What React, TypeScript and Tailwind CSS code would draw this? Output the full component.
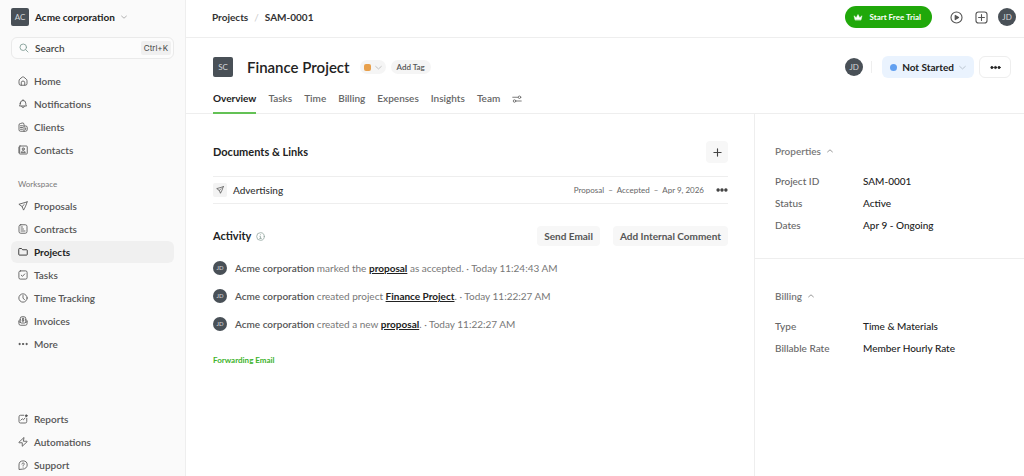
import type { ReactNode } from "react";
import { clsx } from "clsx";

function Icon({ children, className }: { children: ReactNode; className?: string }) {
    return <svg viewBox="0 0 20 20" fill="none" stroke="currentColor" strokeWidth="1.7" strokeLinecap="round" strokeLinejoin="round" aria-hidden="true" className={clsx("shrink-0", className ?? "size-[10px]")}>
        {children}
    </svg>
}

const icons = {
    home: <><path d="M2 9.5C2 8 2.6 7 3.8 6L8 2.5c1.3-1 2.7-1 4 0L16.2 6C17.4 7 18 8 18 9.5V15a3.5 3.5 0 0 1-3.5 3.5h-9A3.5 3.5 0 0 1 2 15z" /><path d="M6.5 18v-4.5a3.5 3.5 0 0 1 7 0V18" /></>,
    bell: <><path d="M4.500 8.500a5.500 5.500 0 0 1 11 0c0 3 .6 4 1.700 5.500H2.800c1.100-1.500 1.700-2.500 1.700-5.500z" /><path d="M7.500 14.500c0 4 5 4 5 0M10 1.500V3" /></>,
    clients: <><path d="M12 18.500V5a3 3 0 0 0-3.500-3L5 3A3 3 0 0 0 2 6v9.500a3 3 0 0 0 3 3h10a3.500 3.500 0 0 0 3.500-3.500v-4A3 3 0 0 0 15.500 8H12" /><path d="M5 7.500h4M5 11h4M5 14.500h4M15.300 12v3" /></>,
    contacts: <><rect x="2.500" y="2" width="16" height="16" rx="1.500" /><circle cx="10.500" cy="8" r="2.200" /><path d="M6.500 14.500c.5-4 7.500-4 8 0zM1 6h3M1 10h3M1 14h3" /></>,
    send: <><path d="M18.200 1.800 1.800 6.500l6.500 4.600 2.800 7.100c3-5 5.400-10.400 7.100-16.400z" /><path d="m8.300 11.100 4.200-4.200" /></>,
    contract: <><rect x="2" y="1.500" width="16" height="17" rx="3.500" /><path d="M6 6h3M6 10h5M6 14h8" /></>,
    folder: <path d="M1.500 4.200c0-.7.500-1.200 1.200-1.200H7l2.300 2.500h8c.7 0 1.200.5 1.200 1.200V15c0 .7-.5 1.200-1.200 1.200H2.700c-.7 0-1.200-.5-1.200-1.200z" />,
    tasks: <><rect x="1.800" y="1.800" width="16.400" height="16.400" rx="3" /><path d="m6.500 10.300 2.500 2.400 4.500-4.900" /></>,
    clock: <><circle cx="10" cy="10" r="8.300" /><path d="M10 5v5.500l3 2.500" /></>,
    invoice: <><path d="M4.500 7C2.500 8 1.800 8.500 1.800 10.500V15A3.500 3.500 0 0 0 5.300 18.500h9.400a3.500 3.500 0 0 0 3.500-3.500v-4.500c0-2-.7-2.500-2.700-3.500" /><path d="M4.500 11V5a3.500 3.500 0 0 1 3.500-3.500h4A3.500 3.500 0 0 1 15.500 5v6M2 11.500l5 2.500h6l5-2.500M11.800 5.500c-3-1.500-4.500.9-2 1.700 3.200.8 2 3.800-1.600 2.500M10 4.200V11" /></>,
    reports: <><path d="M11.500 2.500H5A3 3 0 0 0 2 5.500V15a3 3 0 0 0 3 3h9.500a3 3 0 0 0 3-3V8.500" /><path d="m5.500 12.500 3-3 2.500 2 3-3.500" /><circle cx="16.500" cy="3.500" r="1.800" fill="currentColor" /></>,
    bolt: <path d="M11.500 1.500 1.800 10.500c-.4.500-.1 1 .5 1H8.500v7l9.700-9c.4-.5.100-1-.5-1h-6.200z" />,
    support: <><path d="M2 18.200V10a8.200 8.200 0 1 1 8.200 8.200z" /><path d="M7.800 8c.2-3 5-2.800 4.700.1-.2 1.500-2.300 1.600-2.300 3.400M10.200 14.200v.1" /></>,
    more: <><circle cx="3" cy="10" r="1.300" fill="currentColor" /><circle cx="10" cy="10" r="1.300" fill="currentColor" /><circle cx="17" cy="10" r="1.300" fill="currentColor" /></>,
    dots: <><circle cx="3.500" cy="10" r="2" fill="currentColor" /><circle cx="10" cy="10" r="2" fill="currentColor" /><circle cx="16.500" cy="10" r="2" fill="currentColor" /></>,
    search: <><circle cx="8.500" cy="8.500" r="6.500" /><path d="m13.500 13.500 4.500 4.500" /></>,
    down: <path d="m2 7 8 7 8-7" strokeWidth="2.500" />,
    up: <path d="m2 13 8-7 8 7" strokeWidth="2.500" />,
    plus: <path d="M10 2v16M2 10h16" strokeWidth="2.500" />,
    info: <><circle cx="10" cy="10" r="8.500" /><path d="M10 6v.1M8.500 9.500H10V14M8 14.200h4" /></>,
    play: <><circle cx="10" cy="10" r="8.500" /><path d="M8 6.800v6.400l5.200-3.200z" fill="currentColor" /></>,
    add: <><rect x="1.500" y="1.500" width="17" height="17" rx="4" /><path d="M10 5.500v9M5.500 10h9" /></>,
    sliders: <><path d="M1.500 6.500H12M8.500 14H18.500" /><circle cx="15" cy="6.500" r="2.500" /><circle cx="5" cy="14" r="2.500" /></>,
    crown: <path d="M4 15.500 2 7.500l4.500 4L10 5l3.500 6.500 4.500-4-2 8z" fill="currentColor" strokeWidth="1" />,
};

const mainNav = [
    { label: "Home", icon: icons.home },
    { label: "Notifications", icon: icons.bell },
    { label: "Clients", icon: icons.clients },
    { label: "Contacts", icon: icons.contacts },
];

const workspaceNav = [
    { label: "Proposals", icon: icons.send },
    { label: "Contracts", icon: icons.contract },
    { label: "Projects", icon: icons.folder, active: true },
    { label: "Tasks", icon: icons.tasks },
    { label: "Time Tracking", icon: icons.clock },
    { label: "Invoices", icon: icons.invoice },
    { label: "More", icon: icons.more },
];

const footerNav = [
    { label: "Reports", icon: icons.reports },
    { label: "Automations", icon: icons.bolt },
    { label: "Support", icon: icons.support },
];

const tabs = ["Overview", "Tasks", "Time", "Billing", "Expenses", "Insights", "Team"];

const activity = [
    { action: "marked the", link: "proposal", after: " as accepted.", time: "Today 11:24:43 AM" },
    { action: "created project", link: "Finance Project", after: ".", time: "Today 11:22:27 AM" },
    { action: "created a new", link: "proposal", after: ".", time: "Today 11:22:27 AM" },
];

type NavItem = { label: string; icon: ReactNode; active?: boolean };

function NavList({ items }: { items: NavItem[] }) {
    return <ul className="flex flex-col gap-px">
        {items.map((item) => (
            <li key={item.label}>
                <a href="#" className={clsx("flex h-[22px] items-center gap-[6px] rounded-md px-[7px]", item.active ? "bg-[#f0f0f0] font-bold text-[#222]" : "font-semibold text-[#555]")}>
                    <Icon>{item.icon}</Icon>
                    {item.label}
                </a>
            </li>
        ))}
    </ul>
}

function Avatar({ className }: { className: string }) {
    return <span className={clsx("flex shrink-0 items-center justify-center rounded-full bg-[#495057] text-[#d5d8db]", className)}>JD</span>
}

function Panel({ title, rows, className }: { title: string; rows: string[][]; className?: string }) {
    return <section className={clsx("px-5", className)}>
        <h2>
            <button className="flex h-4 items-center gap-[6px] font-semibold text-[#777]">
                {title}
                <Icon className="size-[6px]">{icons.up}</Icon>
            </button>
        </h2>
        <dl className="mt-[11px] flex flex-col font-medium">
            {rows.map(([label, value]) => (
                <div key={label} className="flex h-[22px] items-center">
                    <dt className="w-22 shrink-0 text-[#666]">{label}</dt>
                    <dd className="text-[#222]">{value}</dd>
                </div>
            ))}
        </dl>
    </section>
}

export default function App() {
    return <div className="flex min-h-screen bg-white font-['Lato',sans-serif] text-[10px] leading-4 text-[#333]">
        <aside className="flex w-[186px] shrink-0 flex-col border-r border-[#eee] bg-[#fafafa] px-[11px] pt-[7px]">
            <button className="flex h-5 items-center gap-[6px] font-bold text-[#222]">
                <span className="flex size-[18px] items-center justify-center rounded-xs bg-[#495057] text-[8px] font-normal text-[#d5d8db]">AC</span>
                Acme corporation
                <Icon className="size-[6px] text-[#999]">{icons.down}</Icon>
            </button>
            <label className="mt-[10px] flex h-[22px] items-center gap-[6px] rounded-md border border-[#eaeaea] bg-[#fcfcfc] pl-[7px] pr-[2px]">
                <Icon className="size-[10px] text-[#7d9a92]">{icons.search}</Icon>
                <input type="text" aria-label="Search" placeholder="Search" className="min-w-0 flex-1 bg-transparent font-semibold outline-none placeholder:text-[#444]" />
                <kbd className="rounded-xs bg-[#f0f0f0] px-[3px] font-['Inter',sans-serif] text-[8px] leading-[14px] text-[#444]">Ctrl+K</kbd>
            </label>
            <nav className="mt-[11px] flex flex-1 flex-col">
                <NavList items={mainNav} />
                <h2 className="mb-[3px] mt-[15px] px-[7px] text-[8px] leading-4 text-[#777]">Workspace</h2>
                <NavList items={workspaceNav} />
                <div className="mt-auto">
                    <NavList items={footerNav} />
                </div>
            </nav>
        </aside>

        <div className="flex min-w-0 flex-1 flex-col">
            <header className="flex items-center border-b border-[#eee] pb-[9px] pl-[26px] pr-2 pt-[6px]">
                <nav className="flex items-center gap-[6px] font-bold text-[#333]">
                    <a href="#">Projects</a>
                    <span className="font-normal text-[#ccc]">/</span>
                    <a href="#">SAM-0001</a>
                </nav>
                <button className="ml-auto flex h-[22px] items-center gap-[6px] rounded-full bg-[#20a80a] pl-2 pr-[11px] text-[8px] font-bold text-white">
                    <Icon>{icons.crown}</Icon>
                    Start Free Trial
                </button>
                <button aria-label="Play" className="ml-[18px] text-[#555]"><Icon className="size-[13px]">{icons.play}</Icon></button>
                <button aria-label="Add" className="ml-3 text-[#555]"><Icon className="size-[13px]">{icons.add}</Icon></button>
                <Avatar className="ml-[10px] size-[18px] text-[8px]" />
            </header>

            <div className="border-b border-[#eee] pl-[27px] pr-[13px] pt-[18px]">
                <div className="flex h-[22px] items-center">
                    <span className="flex size-5 items-center justify-center rounded-xs bg-[#495057] text-[8px] text-[#d5d8db]">SC</span>
                    <h1 className="ml-[14px] text-[15px] font-semibold text-[#222]">Finance Project</h1>
                    <button aria-label="Project color" className="ml-[10px] flex h-[14px] items-center gap-1 rounded-full bg-[#f5f5f5] px-[4px]">
                        <span className="size-[7px] rounded-xs bg-[#e8a04c]" />
                        <Icon className="size-[7px] text-[#bbb]">{icons.down}</Icon>
                    </button>
                    <button className="ml-[5px] h-[14px] rounded-full bg-[#f5f5f5] px-[6px] text-[8px] leading-[14px] font-semibold text-[#555]">Add Tag</button>
                    <Avatar className="ml-auto size-[18px] text-[8px]" />
                    <span className="ml-[8px] h-3 w-px bg-[#eee]" />
                    <button className="ml-[10px] flex h-[22px] items-center gap-[5px] rounded-md bg-[#eaf3fe] px-2 font-bold text-[#222]">
                        <span className="size-[7px] rounded-full bg-[#62a0f0]" />
                        Not Started
                        <Icon className="size-[7px] text-[#b5bfca]">{icons.down}</Icon>
                    </button>
                    <button aria-label="More actions" className="ml-[5px] flex h-[22px] w-8 items-center justify-center rounded-md border border-[#eee] text-[#222]">
                        <Icon className="size-[11px]">{icons.dots}</Icon>
                    </button>
                </div>
                <nav className="-mb-px mt-2 flex h-7 gap-3 font-semibold text-[#666]">
                    {tabs.map((tab, i) => (
                        <a key={tab} href="#" className={clsx("border-b-2 pt-1", i === 0 ? "border-[#63c155] font-bold text-[#222]" : "border-transparent")}>{tab}</a>
                    ))}
                    <button aria-label="Customize tabs" className="pb-[2px]"><Icon>{icons.sliders}</Icon></button>
                </nav>
            </div>

            <div className="flex flex-1">
                <main className="min-w-0 flex-1 pl-[27px] pr-[26px] pt-[27px]">
                    <div className="flex items-center justify-between">
                        <h2 className="text-[11px] font-bold text-[#222]">Documents &amp; Links</h2>
                        <button aria-label="Add document" className="flex size-[22px] items-center justify-center rounded-sm bg-[#f7f7f7] text-[#444]"><Icon className="size-[9px]">{icons.plus}</Icon></button>
                    </div>
                    <div className="mt-[13px] flex h-7 items-center border-y border-[#eee]">
                        <span className="flex size-[14px] items-center justify-center rounded-xs bg-[#f3f3f3] text-[#444]"><Icon className="size-[8px]">{icons.send}</Icon></span>
                        <a href="#" className="ml-[6px] font-medium text-[#333]">Advertising</a>
                        <span className="ml-auto text-[8px] text-[#666]">Proposal &nbsp;–&nbsp; Accepted &nbsp;–&nbsp; Apr 9, 2026</span>
                        <button aria-label="Document actions" className="ml-3 text-[#444]"><Icon className="size-3">{icons.dots}</Icon></button>
                    </div>

                    <div className="mt-[22px] flex items-center">
                        <h2 className="text-[11px] font-bold text-[#222]">Activity</h2>
                        <Icon className="ml-[5px] size-[9px] text-[#8fa39c]">{icons.info}</Icon>
                        <button className="ml-auto h-5 rounded-sm bg-[#f7f7f7] px-[7px] font-bold text-[#555]">Send Email</button>
                        <button className="ml-[13px] h-5 rounded-sm bg-[#f7f7f7] px-[7px] font-bold text-[#555]">Add Internal Comment</button>
                    </div>
                    <ul className="mt-[14px] flex flex-col gap-3">
                        {activity.map((item) => (
                            <li key={item.time + item.action} className="flex items-center gap-2 text-[#777]">
                                <Avatar className="size-[14px] text-[6px]" />
                                <p>
                                    <span className="font-semibold text-[#555]">Acme corporation</span> {item.action} <a href="#" className="font-bold text-[#222] underline">{item.link}</a>{item.after} · {item.time}
                                </p>
                            </li>
                        ))}
                    </ul>
                    <a href="#" className="mt-5 inline-block text-[8px] font-bold text-[#3db32b]">Forwarding Email</a>
                </main>

                <aside className="w-[270px] shrink-0 border-l border-[#eee]">
                    <Panel title="Properties" rows={[["Project ID", "SAM-0001"], ["Status", "Active"], ["Dates", "Apr 9 - Ongoing"]]} className="border-b border-[#eee] pb-[22px] pt-[29px]" />
                    <Panel title="Billing" rows={[["Type", "Time & Materials"], ["Billable Rate", "Member Hourly Rate"]]} className="pt-[29px]" />
                </aside>
            </div>
        </div>
    </div>
}
